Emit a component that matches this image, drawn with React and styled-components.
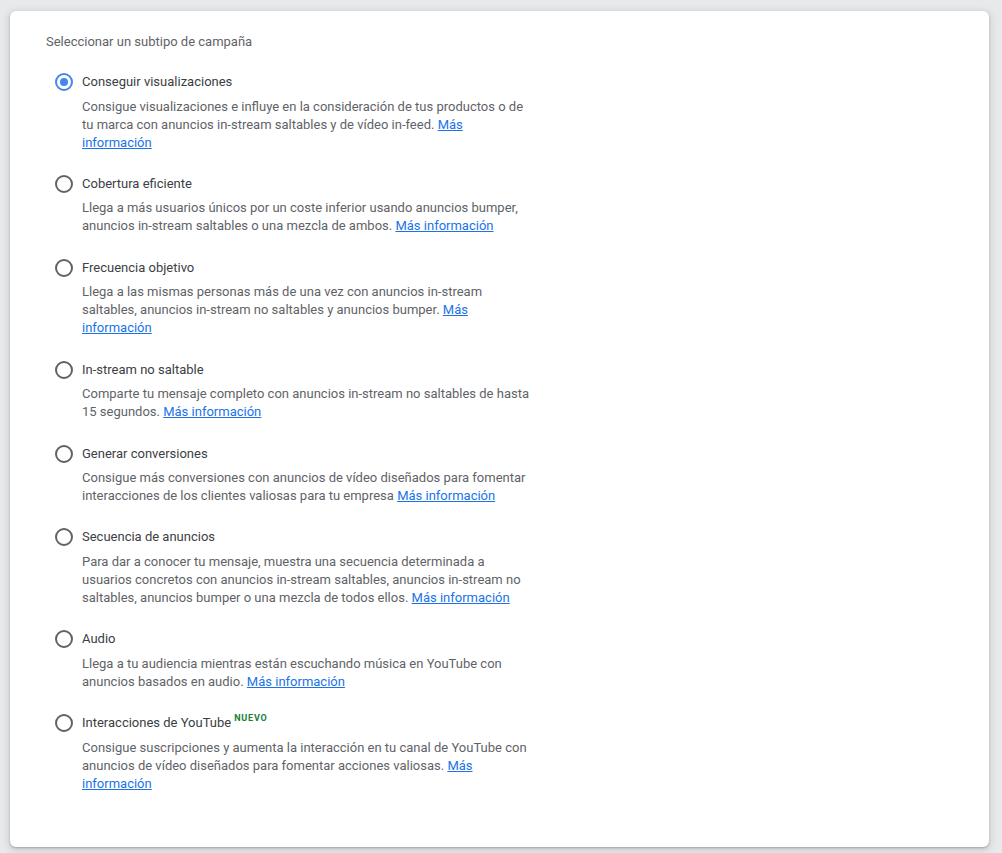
import React from 'react';
import styled, { createGlobalStyle } from 'styled-components';

const GlobalStyle = createGlobalStyle`
  html, body {
    margin: 0;
    padding: 0;
    background: #e8e9eb;
    font-family: Roboto, "Liberation Sans", Arial, sans-serif;
  }
`;

const Page = styled.div`
  padding: 11px 13px 7px 10px;
`;

const Card = styled.div`
  background: #fff;
  border-radius: 6px;
  box-shadow: 0 1px 2px rgba(60, 64, 67, 0.3), 0 2px 6px 2px rgba(60, 64, 67, 0.15);
  padding: 22px 36px 54px 36px;
`;

const Title = styled.div`
  font-size: 13px;
  line-height: 18px;
  color: #5f6368;
  margin-bottom: 21px;
`;

const List = styled.div`
  display: flex;
  flex-direction: column;
  gap: 22.3px;
`;

const Item = styled.label`
  display: grid;
  grid-template-columns: 18px 1fr;
  column-gap: 9px;
  padding-left: 9px;
  cursor: pointer;
`;

const Radio = styled.span`
  width: 18px;
  height: 18px;
  box-sizing: border-box;
  border-radius: 50%;
  border: 2px solid ${(p) => (p.checked ? '#4285f4' : '#5f6368')};
  margin-top: 1px;
  display: flex;
  align-items: center;
  justify-content: center;

  &::after {
    content: '';
    width: 8px;
    height: 8px;
    border-radius: 50%;
    background: ${(p) => (p.checked ? '#4285f4' : 'transparent')};
  }
`;

const Body = styled.div`
  display: flex;
  flex-direction: column;
  gap: 5.6px;
`;

const Label = styled.div`
  font-size: 13px;
  line-height: 20px;
  color: #3c4043;
`;

const New = styled.sup`
  font-size: 9px;
  font-weight: 700;
  letter-spacing: 0.8px;
  color: #188038;
  margin-left: 3px;
  vertical-align: 6px;
  line-height: 0;
`;

const Desc = styled.div`
  font-size: 13px;
  line-height: 18px;
  color: #5f6368;
  width: 450px;
`;

const Link = styled.a`
  color: #1a73e8;
  text-decoration: underline;
  cursor: pointer;
`;

const options = [
  {
    label: 'Conseguir visualizaciones',
    desc: 'Consigue visualizaciones e influye en la consideración de tus productos o de tu marca con anuncios in-stream saltables y de vídeo in-feed.',
  },
  {
    label: 'Cobertura eficiente',
    desc: 'Llega a más usuarios únicos por un coste inferior usando anuncios bumper, anuncios in-stream saltables o una mezcla de ambos.',
  },
  {
    label: 'Frecuencia objetivo',
    desc: 'Llega a las mismas personas más de una vez con anuncios in-stream saltables, anuncios in-stream no saltables y anuncios bumper.',
  },
  {
    label: 'In-stream no saltable',
    desc: 'Comparte tu mensaje completo con anuncios in-stream no saltables de hasta 15 segundos.',
  },
  {
    label: 'Generar conversiones',
    desc: 'Consigue más conversiones con anuncios de vídeo diseñados para fomentar interacciones de los clientes valiosas para tu empresa',
  },
  {
    label: 'Secuencia de anuncios',
    desc: 'Para dar a conocer tu mensaje, muestra una secuencia determinada a usuarios concretos con anuncios in-stream saltables, anuncios in-stream no saltables, anuncios bumper o una mezcla de todos ellos.',
  },
  {
    label: 'Audio',
    desc: 'Llega a tu audiencia mientras están escuchando música en YouTube con anuncios basados en audio.',
  },
  {
    label: 'Interacciones de YouTube',
    isNew: true,
    desc: 'Consigue suscripciones y aumenta la interacción en tu canal de YouTube con anuncios de vídeo diseñados para fomentar acciones valiosas.',
  },
];

export default function App() {
  const [selected, setSelected] = React.useState(0);

  return (
    <Page>
      <GlobalStyle />
      <Card>
        <Title>Seleccionar un subtipo de campaña</Title>
        <List>
          {options.map((o, i) => (
            <Item key={o.label} onClick={() => setSelected(i)}>
              <Radio checked={selected === i} />
              <Body>
                <Label>
                  {o.label}
                  {o.isNew && <New>NUEVO</New>}
                </Label>
                <Desc>
                  {o.desc} <Link>Más información</Link>
                </Desc>
              </Body>
            </Item>
          ))}
        </List>
      </Card>
    </Page>
  );
}
